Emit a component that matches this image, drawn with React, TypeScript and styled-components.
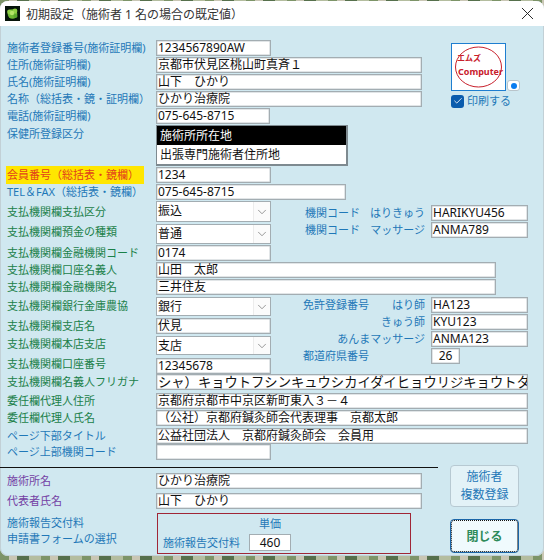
import styled, {createGlobalStyle} from 'styled-components';
import {ChevronDown, X, Check} from 'lucide-react';

const BLUE = '#1f78b8';
const GREEN = '#1a8048';
const PURPLE = '#7440a4';

const GlobalStyle = createGlobalStyle`
  html, body {
    margin: 0;
    padding: 0;
    width: 544px;
    height: 560px;
    overflow: hidden;
    font-family: "Noto Sans", "Noto Sans CJK JP", sans-serif;
  }
`;

const Desktop = styled.div`
  width: 544px;
  height: 560px;
  padding-top: 1px;
  box-sizing: border-box;
  overflow: hidden;
  background: repeating-linear-gradient(90deg, #7d9468 0 9px, #c9c6b4 9px 17px, #56704c 17px 29px, #b4bd9f 29px 41px);
`;

const Window = styled.div`
  width: 544px;
  height: 555px;
  background: #d0e8f0;
  border-radius: 8px;
  overflow: hidden;
  box-shadow: inset 0 0 0 1px #c2d0d6;
`;

const TitleBar = styled.div`
  height: 25px;
  display: flex;
  align-items: center;
  background: #fff;
  padding: 0 6px 0 5px;
  gap: 6px;
  font-size: 12px;
  color: #333;
`;

const TitleText = styled.span`
  flex: 1;
`;

const Body = styled.div`
  padding-top: 14px;
`;

const Section = styled.div`
  display: flex;
  align-items: flex-start;
`;

const Column = styled.div<{$w: number}>`
  width: ${(p) => p.$w}px;
  flex: none;
`;

const Row = styled.div<{$mb?: number}>`
  display: flex;
  align-items: center;
  margin-bottom: ${(p) => p.$mb ?? 1}px;
`;

const Label = styled.div<{$color?: string; $up?: number}>`
  width: 156px;
  flex: none;
  box-sizing: border-box;
  padding-left: 7px;
  padding-bottom: ${(p) => p.$up ?? 0}px;
  font-size: 11px;
  line-height: 14px;
  white-space: nowrap;
  color: ${(p) => p.$color ?? BLUE};
`;

const Marked = styled.span`
  display: inline-block;
  margin: -2px 0 -2px -1px;
  padding: 2px 5px 2px 1px;
  background: #ffe600;
  color: #e2401c;
`;

const Field = styled.div<{$w: number; $center?: boolean; $size?: number}>`
  width: ${(p) => p.$w}px;
  height: 16px;
  flex: none;
  box-sizing: border-box;
  overflow: hidden;
  background: #fff;
  border: 1px solid #a3adb2;
  box-shadow: inset 0 0 0 0.5px #c4ccd0;
  padding: 0 1px;
  font-size: ${(p) => p.$size ?? 12}px;
  line-height: 14px;
  white-space: nowrap;
  color: #111;
  text-align: ${(p) => (p.$center ? 'center' : 'left')};
`;

const SelectBox = styled.div<{$h: number}>`
  width: 115px;
  height: ${(p) => p.$h}px;
  flex: none;
  box-sizing: border-box;
  display: flex;
  background: #fff;
  border: 1px solid #a3adb2;
  font-size: 12px;
  color: #111;
`;

const SelectText = styled.span`
  flex: 1;
  padding-left: 1px;
  line-height: 17px;
`;

const SelectArrow = styled.span`
  width: 16px;
  display: flex;
  align-items: center;
  justify-content: center;
  background: #fbfbfb;
  border-left: 1px solid #ececec;
  color: #6f6f6f;
`;

const ListBox = styled.div`
  width: 192px;
  height: 41px;
  flex: none;
  box-sizing: border-box;
  background: #fff;
  border: 1px solid #7e8a90;
  border-width: 1px 2px 2px 1px;
  font-size: 12px;
  color: #111;
`;

const ListItem = styled.div<{$selected?: boolean}>`
  height: 19px;
  line-height: 19px;
  padding-left: 3px;
  background: ${(p) => (p.$selected ? '#000' : 'transparent')};
  color: ${(p) => (p.$selected ? '#fff' : '#111')};
`;

const StampColumn = styled.div`
  margin-left: 29px;
  padding-top: 3px;
`;

const StampRow = styled.div`
  display: flex;
  align-items: flex-end;
  gap: 1px;
`;

const Stamp = styled.div`
  width: 55px;
  height: 48px;
  box-sizing: border-box;
  background: #fff;
  border: 1px solid #1e7ed0;
`;

const StampSvg = styled.svg`
  display: block;
`;

const RadioBox = styled.span`
  width: 13px;
  height: 11px;
  box-sizing: border-box;
  display: flex;
  align-items: center;
  justify-content: center;
  background: #fff;
  border: 1px solid #b9c4ca;
  border-radius: 3px;
`;

const RadioDot = styled.span`
  width: 6px;
  height: 6px;
  border-radius: 50%;
  background: #0a7cf0;
`;

const PrintRow = styled.div`
  display: flex;
  align-items: center;
  gap: 3px;
  margin-top: 3px;
  font-size: 11px;
  line-height: 14px;
  color: ${BLUE};
`;

const CheckBox = styled.span`
  width: 13px;
  height: 13px;
  display: flex;
  align-items: center;
  justify-content: center;
  border-radius: 3px;
  background: #0a5cad;
  color: #fff;
`;

const SideColumn = styled.div<{$pt: number}>`
  flex: none;
  width: 257px;
  padding-top: ${(p) => p.$pt}px;
`;

const SideRow = styled.div`
  display: flex;
  align-items: center;
  margin-bottom: 1px;
`;

const SideLabel = styled.div<{$left: number; $align?: string}>`
  width: 160px;
  flex: none;
  box-sizing: border-box;
  display: flex;
  justify-content: ${(p) => p.$align ?? 'space-between'};
  padding: 0 6px 0 ${(p) => p.$left}px;
  font-size: 11px;
  line-height: 14px;
  white-space: nowrap;
  color: ${BLUE};
`;

const Bottom = styled.div`
  display: flex;
  align-items: flex-start;
`;

const BottomLeft = styled.div`
  width: 438px;
  flex: none;
`;

const Divider = styled.hr`
  height: 1px;
  margin: 7px 0 5px;
  border: 0;
  background: #111;
`;

const FeeLabels = styled.div`
  width: 157px;
  flex: none;
  box-sizing: border-box;
  align-self: flex-start;
  padding: 2px 0 0 7px;
  font-size: 11px;
  line-height: 16px;
  white-space: nowrap;
  color: ${BLUE};
`;

const FeeBox = styled.div`
  width: 254px;
  height: 41px;
  box-sizing: border-box;
  display: grid;
  grid-template-columns: 86px 42px;
  grid-template-rows: 20px 17px;
  padding-left: 5px;
  border: 1px solid #a02636;
  font-size: 11px;
  color: ${BLUE};
`;

const FeeHead = styled.div`
  grid-column: 2;
  text-align: center;
  line-height: 19px;
`;

const FeeCaption = styled.div`
  line-height: 17px;
  white-space: nowrap;
`;

const FeeValue = styled.div`
  box-sizing: border-box;
  border: 1px solid #a3adb2;
  background: #fff;
  font-size: 12px;
  line-height: 15px;
  text-align: center;
  color: #111;
`;

const ButtonColumn = styled.div`
  margin: 5px 0 0 12px;
  width: 69px;
  display: flex;
  flex-direction: column;
  gap: 12px;
`;

const MultiButton = styled.button`
  height: 42px;
  padding: 0;
  border: 1px solid #b7c9d2;
  border-radius: 4px;
  background: #e3f2f7;
  font: inherit;
  font-size: 12px;
  line-height: 18px;
  color: ${BLUE};
`;

const CloseButton = styled.button`
  height: 34px;
  padding: 0;
  border: 1px solid #1b66a8;
  border-radius: 4px;
  outline: 1px dotted #111;
  outline-offset: -2px;
  background: #f0fafd;
  font: inherit;
  font-size: 12px;
  font-weight: 700;
  color: #2e8b5a;
`;

const Select = ({text, h}: {text: string; h: number}) => (
  <SelectBox $h={h}>
    <SelectText>{text}</SelectText>
    <SelectArrow>
      <ChevronDown size={14} strokeWidth={1.2} />
    </SelectArrow>
  </SelectBox>
);

export default function App() {
  return (
    <Desktop>
      <GlobalStyle />
      <Window>
        <TitleBar>
          <svg width="15" height="15" viewBox="0 0 15 15">
            <rect width="15" height="15" fill="#06140a" />
            <circle cx="7.5" cy="8" r="4.8" fill="#6fb934" />
            <circle cx="4.5" cy="6" r="2.4" fill="#8fd044" />
            <circle cx="10" cy="5" r="2.4" fill="#8fd044" />
            <circle cx="7" cy="7" r="2.2" fill="#b4e468" />
            <circle cx="10.5" cy="10" r="2" fill="#5aa62c" />
          </svg>
          <TitleText>初期設定（施術者 1 名の場合の既定値）</TitleText>
          <X size={21} strokeWidth={1.1} color="#222" />
        </TitleBar>
        <Body>
          <Section>
            <Column $w={422}>
              <Row>
                <Label>施術者登録番号(施術証明欄)</Label>
                <Field $w={115}>1234567890AW</Field>
              </Row>
              <Row>
                <Label>住所(施術証明欄)</Label>
                <Field $w={266}>京都市伏見区桃山町真斉１</Field>
              </Row>
              <Row>
                <Label>氏名(施術証明欄)</Label>
                <Field $w={266}>山下　ひかり</Field>
              </Row>
              <Row>
                <Label>名称（総括表・鏡・証明欄）</Label>
                <Field $w={266}>ひかり治療院</Field>
              </Row>
              <Row>
                <Label>電話(施術証明欄)</Label>
                <Field $w={114}>075-645-8715</Field>
              </Row>
              <Row>
                <Label $up={24}>保健所登録区分</Label>
                <ListBox>
                  <ListItem $selected>施術所所在地</ListItem>
                  <ListItem>出張専門施術者住所地</ListItem>
                </ListBox>
              </Row>
              <Row>
                <Label>
                  <Marked>会員番号（総括表・鏡欄）</Marked>
                </Label>
                <Field $w={115}>1234</Field>
              </Row>
              <Row>
                <Label>TEL＆FAX（総括表・鏡欄）</Label>
                <Field $w={190}>075-645-8715</Field>
              </Row>
            </Column>
            <StampColumn>
              <StampRow>
                <Stamp>
                  <StampSvg width="53" height="46" viewBox="0 0 53 46">
                    <ellipse cx="26.5" cy="23" rx="23" ry="20" fill="none" stroke="#c8202c" strokeWidth="1" />
                    <text x="5" y="17" fontSize="8" fontWeight="700" fill="#c8202c">エムズ</text>
                    <text x="6" y="31" fontSize="9" fontWeight="700" fill="#c8202c">Computer</text>
                  </StampSvg>
                </Stamp>
                <RadioBox>
                  <RadioDot />
                </RadioBox>
              </StampRow>
              <PrintRow>
                <CheckBox>
                  <Check size={10} strokeWidth={2} />
                </CheckBox>
                印刷する
              </PrintRow>
            </StampColumn>
          </Section>

          <Section>
            <Column $w={271}>
              <Row $mb={2}>
                <Label $color={GREEN}>支払機関欄支払区分</Label>
                <Select text="振込" h={21} />
              </Row>
              <Row>
                <Label $color={GREEN} $up={4}>支払機関欄預金の種類</Label>
                <Select text="普通" h={20} />
              </Row>
            </Column>
            <SideColumn $pt={4}>
              <SideRow>
                <SideLabel $left={34}>
                  <span>機関コード</span>
                  <span>はりきゅう</span>
                </SideLabel>
                <Field $w={97}>HARIKYU456</Field>
              </SideRow>
              <SideRow>
                <SideLabel $left={34}>
                  <span>機関コード</span>
                  <span>マッサージ</span>
                </SideLabel>
                <Field $w={97}>ANMA789</Field>
              </SideRow>
            </SideColumn>
          </Section>

          <Row>
            <Label $color={GREEN}>支払機関欄金融機関コード</Label>
            <Field $w={115}>0174</Field>
          </Row>
          <Row>
            <Label $color={GREEN}>支払機関欄口座名義人</Label>
            <Field $w={340}>山田　太郎</Field>
          </Row>
          <Row $mb={2}>
            <Label $color={GREEN}>支払機関欄金融機関名</Label>
            <Field $w={340}>三井住友</Field>
          </Row>

          <Section>
            <Column $w={271}>
              <Row $mb={2}>
                <Label $color={GREEN} $up={2}>支払機関欄銀行金庫農協</Label>
                <Select text="銀行" h={19} />
              </Row>
              <Row $mb={2}>
                <Label $color={GREEN}>支払機関欄支店名</Label>
                <Field $w={115}>伏見</Field>
              </Row>
              <Row $mb={2}>
                <Label $color={GREEN} $up={3}>支払機関欄本店支店</Label>
                <Select text="支店" h={19} />
              </Row>
              <Row $mb={0}>
                <Label $color={GREEN} $up={3}>支払機関欄口座番号</Label>
                <Field $w={115}>12345678</Field>
              </Row>
            </Column>
            <SideColumn $pt={0}>
              <SideRow>
                <SideLabel $left={32}>
                  <span>免許登録番号</span>
                  <span>はり師</span>
                </SideLabel>
                <Field $w={97}>HA123</Field>
              </SideRow>
              <SideRow>
                <SideLabel $left={32} $align="flex-end">きゅう師</SideLabel>
                <Field $w={97}>KYU123</Field>
              </SideRow>
              <SideRow>
                <SideLabel $left={32} $align="flex-end">あんまマッサージ</SideLabel>
                <Field $w={97}>ANMA123</Field>
              </SideRow>
              <SideRow>
                <SideLabel $left={32} $align="flex-start">都道府県番号</SideLabel>
                <Field $w={29} $center>26</Field>
              </SideRow>
            </SideColumn>
          </Section>

          <Row $mb={3}>
            <Label $color={GREEN}>支払機関欄名義人フリガナ</Label>
            <Field $w={372} $size={13.3}>シャ）キョウトフシンキュウシカイダイヒョウリジキョウトタロウ</Field>
          </Row>
          <Row>
            <Label $color={GREEN}>委任欄代理人住所</Label>
            <Field $w={372}>京都府京都市中京区新町東入３－４</Field>
          </Row>
          <Row $mb={2}>
            <Label $color={GREEN}>委任欄代理人氏名</Label>
            <Field $w={372}>（公社）京都府鍼灸師会代表理事　京都太郎</Field>
          </Row>
          <Row $mb={0}>
            <Label>ページ下部タイトル</Label>
            <Field $w={372}>公益社団法人　京都府鍼灸師会　会員用</Field>
          </Row>
          <Row $mb={0}>
            <Label>ページ上部機関コード</Label>
            <Field $w={115} />
          </Row>

          <Bottom>
            <BottomLeft>
              <Divider />
              <Row $mb={4}>
                <Label $color={PURPLE}>施術所名</Label>
                <Field $w={266}>ひかり治療院</Field>
              </Row>
              <Row $mb={4}>
                <Label $color={PURPLE}>代表者氏名</Label>
                <Field $w={266}>山下　ひかり</Field>
              </Row>
              <Row>
                <FeeLabels>
                  施術報告交付料
                  <br />
                  申請書フォームの選択
                </FeeLabels>
                <FeeBox>
                  <FeeHead>単価</FeeHead>
                  <FeeCaption>施術報告交付料</FeeCaption>
                  <FeeValue>460</FeeValue>
                </FeeBox>
              </Row>
            </BottomLeft>
            <ButtonColumn>
              <MultiButton>
                施術者
                <br />
                複数登録
              </MultiButton>
              <CloseButton>閉じる</CloseButton>
            </ButtonColumn>
          </Bottom>
        </Body>
      </Window>
    </Desktop>
  );
}
